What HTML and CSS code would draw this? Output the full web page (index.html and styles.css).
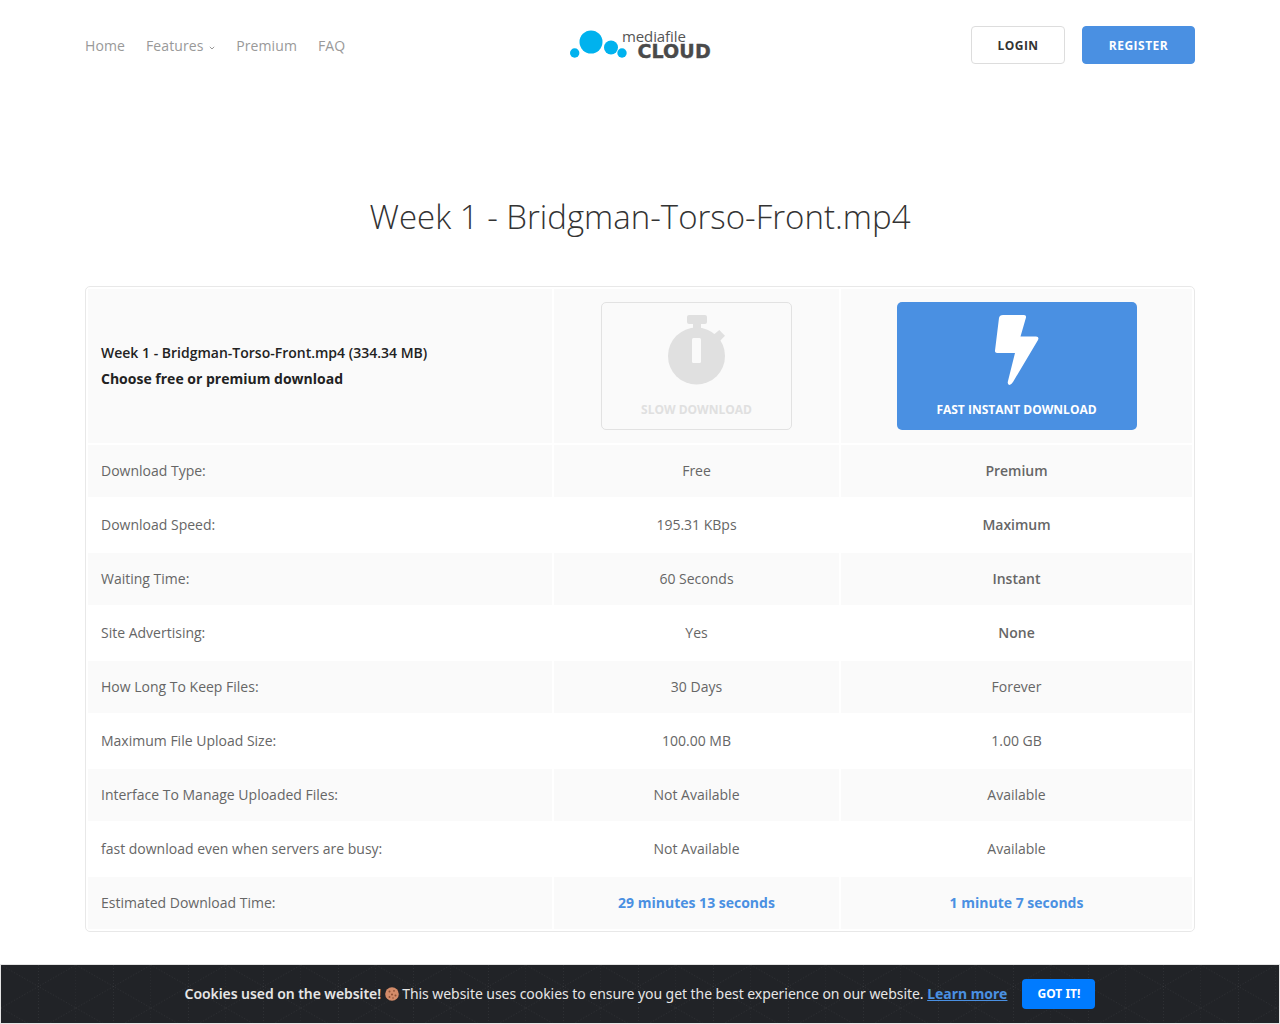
FILE: index.html
```html
<!DOCTYPE html>
<html lang="en">
<head>
    <meta charset="UTF-8">
    <meta name="viewport" content="width=device-width, initial-scale=1.0">
    <title>Week 1 - Bridgman-Torso-Front.mp4</title>
    <link rel="stylesheet" href="styles.css">
</head>
<body>

    <div class="header">
        <ul class="nav">
            <li>Home</li>
            <li>Features <svg class="caret" width="6" height="4" viewBox="0 0 6 4"><path d="M.8.8 3 3 5.2.8" fill="none" stroke="#999" stroke-width="1"/></svg></li>
            <li>Premium</li>
            <li>FAQ</li>
        </ul>
        <div class="logo">
            <svg width="52" height="30" viewBox="0 0 52 30">
                <circle cx="4.700" cy="23" r="4.700" fill="#00b2ee"/>
                <circle cx="21" cy="12" r="11.500" fill="#00b2ee"/>
                <circle cx="41" cy="17.500" r="7" fill="#00b2ee"/>
                <circle cx="52" cy="23" r="4.700" fill="#00b2ee"/>
            </svg>
            <div class="logo-text">
                <span class="logo-top">mediafile</span>
                <span class="logo-bottom">CLOUD</span>
            </div>
        </div>
        <div class="header-buttons">
            <a class="btn btn-login">LOGIN</a>
            <a class="btn btn-register">REGISTER</a>
        </div>
    </div>

    <h1>Week 1 - Bridgman-Torso-Front.mp4</h1>

    <div class="table-wrap">
        <table>
            <tr class="head-row">
                <td class="file-info">
                    <strong>Week 1 - Bridgman-Torso-Front.mp4 (334.34 MB)</strong>
                    <strong class="choose">Choose free or premium download</strong>
                </td>
                <td>
                    <div class="dl-box dl-slow">
                        <svg width="58" height="70" viewBox="0 0 58 70">
                            <rect x="19" y="0" width="20" height="9" rx="2" fill="#e0e0e0"/>
                            <rect x="25" y="8" width="8" height="8" fill="#e0e0e0"/>
                            <path d="M44 21 51.300 15 57 20.700 50 28z" fill="#e0e0e0"/>
                            <circle cx="28.500" cy="41" r="28.500" fill="#e0e0e0"/>
                            <rect x="24" y="23" width="9" height="25" rx="1.500" fill="#fafafa"/>
                        </svg>
                        <span>SLOW DOWNLOAD</span>
                    </div>
                </td>
                <td>
                    <div class="dl-box dl-fast">
                        <svg width="44" height="70" viewBox="0 0 44 70">
                            <path d="M8 0H29Q31.500 0 31 2.500L25.500 21.500H41Q44.500 21.500 43 25L18 67Q16 70 14.500 70Q12 69.500 13 66L20 38H2Q-.3 38 0 35.500L4 3Q4.500 0 8 0Z" fill="#fff"/>
                        </svg>
                        <span>FAST INSTANT DOWNLOAD</span>
                    </div>
                </td>
            </tr>
            <tr><td>Download Type:</td><td>Free</td><td class="strong">Premium</td></tr>
            <tr><td>Download Speed:</td><td>195.31 KBps</td><td class="strong">Maximum</td></tr>
            <tr><td>Waiting Time:</td><td>60 Seconds</td><td class="strong">Instant</td></tr>
            <tr><td>Site Advertising:</td><td>Yes</td><td class="strong">None</td></tr>
            <tr><td>How Long To Keep Files:</td><td>30 Days</td><td>Forever</td></tr>
            <tr><td>Maximum File Upload Size:</td><td>100.00 MB</td><td>1.00 GB</td></tr>
            <tr><td>Interface To Manage Uploaded Files:</td><td>Not Available</td><td>Available</td></tr>
            <tr><td>fast download even when servers are busy:</td><td>Not Available</td><td>Available</td></tr>
            <tr><td>Estimated Download Time:</td><td class="time">29 minutes 13 seconds</td><td class="time">1 minute 7 seconds</td></tr>
        </table>
    </div>

    <div class="cookie-bar">
        <span class="cookie-text"><b>Cookies used on the website!</b>
        <svg class="cookie" width="14" height="14" viewBox="0 0 14 14">
            <circle cx="7" cy="7" r="6.800" fill="#d38b69"/>
            <circle cx="4.500" cy="4.500" r="1" fill="#8a4f35"/>
            <circle cx="9" cy="3.800" r=".9" fill="#8a4f35"/>
            <circle cx="7" cy="7.500" r="1" fill="#8a4f35"/>
            <circle cx="10.500" cy="8.500" r="1" fill="#8a4f35"/>
            <circle cx="4.500" cy="10" r=".9" fill="#8a4f35"/>
            <circle cx="8" cy="11" r=".8" fill="#8a4f35"/>
        </svg>
        This website uses cookies to ensure you get the best experience on our website. <a class="learn">Learn more</a></span>
        <a class="got-it">GOT IT!</a>
    </div>

</body>
</html>
```

FILE: styles.css
```css
body {
    font-family: 'Open Sans', sans-serif;
    margin: 0;
    background-color: #fff;
    color: #666;
    font-size: 14px;
}

.header {
    display: grid;
    grid-template-columns: 1fr auto 1fr;
    align-items: center;
    padding: 26px 85px 0;
    height: 38px;
}

.nav {
    display: flex;
    gap: 21px;
    list-style: none;
    margin: 0;
    padding: 0;
    color: #999;
    letter-spacing: 0.1px;
}

.caret {
    margin-left: 2px;
    vertical-align: 1px;
}

.logo {
    display: flex;
    align-items: flex-start;
    width: 140px;
    height: 30px;
}

.logo svg {
    flex: none;
    overflow: visible;
}

.logo-text {
    display: flex;
    flex-direction: column;
    align-items: flex-end;
    flex: 1;
    margin-top: -1px;
    color: #555;
}

.logo-top {
    font-size: 15px;
    line-height: 14px;
    margin-right: 26px;
    letter-spacing: -0.1px;
}

.logo-bottom {
    margin-right: 1px;
    font-family: 'DejaVu Sans', sans-serif;
    font-weight: 700;
    font-size: 19px;
    line-height: 17px;
    color: #4a4a4a;
    -webkit-text-stroke: 0.4px #4a4a4a;
    letter-spacing: 0.1px;
}

.header-buttons {
    display: flex;
    justify-content: flex-end;
    gap: 17px;
}

.btn {
    display: block;
    box-sizing: border-box;
    height: 38px;
    line-height: 38px;
    border: 1px solid #ddd;
    border-radius: 4px;
    text-align: center;
    font-size: 12px;
    font-weight: 700;
    letter-spacing: 0.5px;
}

.btn-login {
    width: 94px;
    color: #333;
}

.btn-register {
    width: 113px;
    background-color: #4a90e2;
    border-color: #4a90e2;
    color: #fff;
}

h1 {
    margin: 130px 0 46px;
    text-align: center;
    font-size: 33px;
    font-weight: 300;
    line-height: 46px;
    color: #333;
}

.table-wrap {
    margin: 0 85px;
    border: 1px solid #e8e8e8;
    border-radius: 5px;
}

table {
    width: 100%;
    border-collapse: separate;
    border-spacing: 2px;
    table-layout: fixed;
}

td {
    height: 52px;
    padding: 0 13px 2px;
    text-align: center;
    box-sizing: border-box;
    background-color: #fff;
}

td:first-child {
    width: 464px;
    text-align: left;
}

td:nth-child(2) {
    width: 285px;
}

tr:nth-child(even) td,
.head-row td {
    background-color: #fafafa;
}

.head-row td {
    height: 154px;
    padding-bottom: 0;
}

.head-row strong {
    display: block;
    color: #222;
    font-weight: 600;
    line-height: 26px;
}

.head-row .choose {
    font-weight: 700;
}

.strong {
    font-weight: 600;
}

.time {
    color: #4a90e2;
    font-weight: 700;
}

.dl-box {
    display: flex;
    flex-direction: column;
    align-items: center;
    box-sizing: border-box;
    height: 128px;
    margin: 0 auto;
    padding-top: 12px;
    border-radius: 5px;
    font-size: 12px;
    font-weight: 700;
}

.dl-box span {
    margin-top: 16px;
}

.dl-slow {
    width: 191px;
    border: 1px solid #e2e2e2;
    color: #e0e0e0;
}

.dl-fast {
    width: 240px;
    padding-top: 13px;
    background-color: #4a90e2;
    color: #fff;
}

.cookie-bar {
    position: fixed;
    left: 0;
    right: 0;
    bottom: 0;
    box-sizing: border-box;
    height: 60px;
    display: flex;
    justify-content: center;
    align-items: center;
    gap: 15px;
    border: 1px solid #e4e4e4;
    background-color: #212327;
    background-image: url("data:image/svg+xml,%3Csvg xmlns='http://www.w3.org/2000/svg' width='75' height='43'%3E%3Cg fill='none' stroke='%23fff' stroke-opacity='.06' stroke-dasharray='1 2'%3E%3Cpath d='M37.500 0V43M75 0V43M0 0 75 43M0 43 75 0'/%3E%3C/g%3E%3C/svg%3E");
    color: #e6e6e6;
    font-family: 'Noto Sans', sans-serif;
    font-size: 14px;
}

.cookie-text {
    padding-bottom: 2px;
    letter-spacing: -0.05px;
}

.cookie-text b {
    font-weight: 600;
    letter-spacing: -0.07px;
}

.cookie {
    vertical-align: -2px;
}

.learn {
    color: #4a90e2;
    font-weight: 700;
    letter-spacing: 0;
    text-decoration: underline;
}

.got-it {
    display: block;
    width: 73px;
    height: 30px;
    line-height: 30px;
    border-radius: 4px;
    background-color: #007bff;
    color: #fff;
    text-align: center;
    font-size: 12px;
    font-weight: 700;
}
```
